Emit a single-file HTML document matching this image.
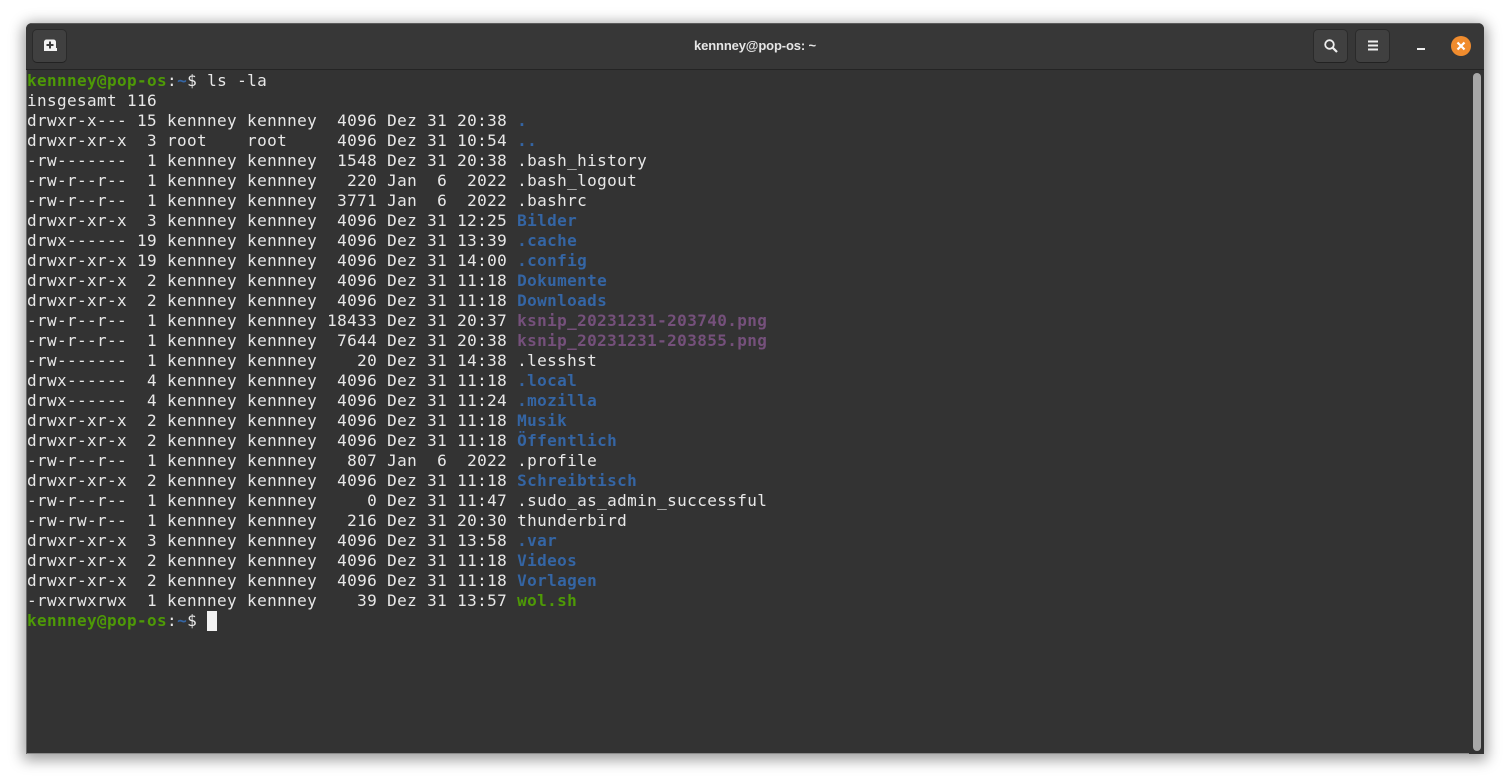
<!DOCTYPE html>
<html><head><meta charset="utf-8"><style>
html,body{margin:0;padding:0;width:1510px;height:783px;background:#fff;overflow:hidden}
#win{position:absolute;left:26px;top:23px;width:1458px;height:731px;background:#333;border-radius:6px 6px 0 0;box-shadow:0 3px 14px 3px rgba(0,0,0,.38);overflow:hidden}
#hd{position:absolute;left:0;top:0;width:1458px;height:47px;background:#373737;border-bottom:1px solid #242424;box-sizing:border-box;border-top:1px solid #5a5a5a}
.btn{position:absolute;top:5px;width:35px;height:34px;background:#404040;border:1px solid #2a2a2a;border-bottom-color:#222;border-radius:5px;box-sizing:border-box}
.btn svg{position:absolute;left:0;top:0}
#title{position:absolute;left:0;width:1458px;top:13px;text-align:center;font:bold 13px/18px "Liberation Sans",sans-serif;letter-spacing:-.14px;color:#e6e6e6}
#t{position:absolute;left:1px;top:48px;margin:0;font:16px/20px "DejaVu Sans Mono",monospace;letter-spacing:.37px;color:#e8e8e8;white-space:pre}
b{font-weight:bold}.g{color:#4e9a06}.u{color:#3465a4}.p{color:#75507b}
#sb{position:absolute;left:1447px;top:50px;width:8px;height:678px;background:#a8a8a8;border-radius:4px}
#cur{position:absolute;left:181px;top:588px;width:10px;height:20px;background:#f2f2f2}
#bl{position:absolute;left:0;top:730px;width:1443px;height:1px;background:#8a8a8a}
#ll{position:absolute;left:0;top:47px;width:1px;height:684px;background:#6a6a6a}
</style></head><body>
<div id="win">
<div id="hd">
<div class="btn" style="left:6px"><svg width="33" height="32" viewBox="0 0 33 32"><path d="M11 21v-9a2.500 2.500 0 0 1 2.500-2.500h7a2.500 2.500 0 0 1 2.500 2.500v6h1v3z" fill="#f2f2f2"/><path d="M17 11.500v7M13.500 15h7" stroke="#3a3a3a" stroke-width="2"/></svg></div>
<div id="title">kennney@pop-os: ~</div>
<div class="btn" style="left:1287px"><svg width="33" height="32" viewBox="0 0 33 32"><circle cx="15.500" cy="14.500" r="4.300" fill="none" stroke="#eee" stroke-width="1.800"/><path d="M18.800 17.800l4.200 4.200" stroke="#eee" stroke-width="2.200"/></svg></div>
<div class="btn" style="left:1329px"><svg width="33" height="32" viewBox="0 0 33 32"><path d="M12 11.500h10M12 15.500h10M12 19.500h10" stroke="#eee" stroke-width="2"/></svg></div>
<svg style="position:absolute;left:1385px;top:12px" width="60" height="24" viewBox="0 0 60 24"><rect x="6" y="12" width="8" height="2" fill="#eee"/><circle cx="50" cy="10" r="10" fill="#f08c2e"/><path d="M46.500 6.500l7 7M53.500 6.500l-7 7" stroke="#fff" stroke-width="2.200"/></svg>
</div>
<pre id="t"><b class="g">kennney@pop-os</b>:<b class="u">~</b>$ ls -la
insgesamt 116
drwxr-x--- 15 kennney kennney  4096 Dez 31 20:38 <b class="u">.</b>
drwxr-xr-x  3 root    root     4096 Dez 31 10:54 <b class="u">..</b>
-rw-------  1 kennney kennney  1548 Dez 31 20:38 .bash_history
-rw-r--r--  1 kennney kennney   220 Jan  6  2022 .bash_logout
-rw-r--r--  1 kennney kennney  3771 Jan  6  2022 .bashrc
drwxr-xr-x  3 kennney kennney  4096 Dez 31 12:25 <b class="u">Bilder</b>
drwx------ 19 kennney kennney  4096 Dez 31 13:39 <b class="u">.cache</b>
drwxr-xr-x 19 kennney kennney  4096 Dez 31 14:00 <b class="u">.config</b>
drwxr-xr-x  2 kennney kennney  4096 Dez 31 11:18 <b class="u">Dokumente</b>
drwxr-xr-x  2 kennney kennney  4096 Dez 31 11:18 <b class="u">Downloads</b>
-rw-r--r--  1 kennney kennney 18433 Dez 31 20:37 <b class="p">ksnip_20231231-203740.png</b>
-rw-r--r--  1 kennney kennney  7644 Dez 31 20:38 <b class="p">ksnip_20231231-203855.png</b>
-rw-------  1 kennney kennney    20 Dez 31 14:38 .lesshst
drwx------  4 kennney kennney  4096 Dez 31 11:18 <b class="u">.local</b>
drwx------  4 kennney kennney  4096 Dez 31 11:24 <b class="u">.mozilla</b>
drwxr-xr-x  2 kennney kennney  4096 Dez 31 11:18 <b class="u">Musik</b>
drwxr-xr-x  2 kennney kennney  4096 Dez 31 11:18 <b class="u">Öffentlich</b>
-rw-r--r--  1 kennney kennney   807 Jan  6  2022 .profile
drwxr-xr-x  2 kennney kennney  4096 Dez 31 11:18 <b class="u">Schreibtisch</b>
-rw-r--r--  1 kennney kennney     0 Dez 31 11:47 .sudo_as_admin_successful
-rw-rw-r--  1 kennney kennney   216 Dez 31 20:30 thunderbird
drwxr-xr-x  3 kennney kennney  4096 Dez 31 13:58 <b class="u">.var</b>
drwxr-xr-x  2 kennney kennney  4096 Dez 31 11:18 <b class="u">Videos</b>
drwxr-xr-x  2 kennney kennney  4096 Dez 31 11:18 <b class="u">Vorlagen</b>
-rwxrwxrwx  1 kennney kennney    39 Dez 31 13:57 <b class="g">wol.sh</b>
<b class="g">kennney@pop-os</b>:<b class="u">~</b>$ </pre>
<div id="cur"></div>
<div id="sb"></div>
<div id="bl"></div>
<div id="ll"></div>
</div>
</body></html>
